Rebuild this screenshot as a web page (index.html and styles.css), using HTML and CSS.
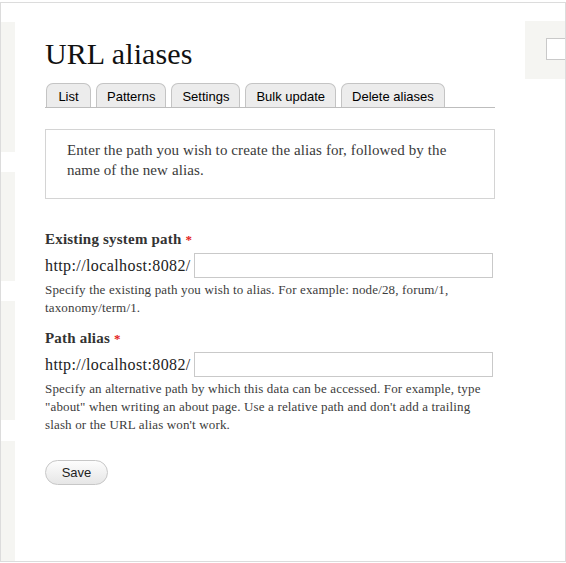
FILE: index.html
```html
<!DOCTYPE html>
<html>
<head>
<meta charset="utf-8">
<title>URL aliases</title>
<link rel="stylesheet" href="styles.css">
</head>
<body>
<div class="crumbs">
  <div class="crumbs-line"><a href="#">Configuration</a> » <a href="#">Search and metadata</a> » <a href="#">URL aliases</a></div>
</div>
<div class="frame">
  <div class="side">
    <div class="side-block b1"></div>
    <div class="side-block b2"></div>
    <div class="side-block b3"></div>
    <div class="side-block b4"></div>
  </div>
  <div class="main">
    <h1 class="title">URL aliases</h1>
    <ul class="tabs">
      <li class="tab">List</li>
      <li class="tab">Patterns</li>
      <li class="tab">Settings</li>
      <li class="tab">Bulk update</li>
      <li class="tab">Delete aliases</li>
    </ul>
    <div class="help">Enter the path you wish to create the alias for, followed by the name of the new alias.</div>
    <div class="field field-first">
      <label class="label">Existing system path <span class="req">*</span></label>
      <div class="prefix-row"><span class="prefix">http://localhost:8082/</span><input class="text-input" type="text"></div>
      <div class="desc">Specify the existing path you wish to alias. For example: node/28, forum/1, taxonomy/term/1.</div>
    </div>
    <div class="field">
      <label class="label">Path alias <span class="req">*</span></label>
      <div class="prefix-row"><span class="prefix">http://localhost:8082/</span><input class="text-input" type="text"></div>
      <div class="desc">Specify an alternative path by which this data can be accessed. For example, type "about" when writing an about page. Use a relative path and don't add a trailing slash or the URL alias won't work.</div>
    </div>
    <button class="save" type="button">Save</button>
  </div>
  <div class="aside">
    <div class="aside-block"><input class="search-input" type="text"></div>
  </div>
</div>
</body>
</html>
```

FILE: styles.css
```css
html, body {
  margin: 0;
  padding: 0;
  background: #fff;
}
body {
  width: 566px;
  height: 563px;
  overflow: hidden;
  font-family: "Liberation Serif", "Times New Roman", serif;
  color: #333;
}
.crumbs {
  height: 2px;
  overflow: hidden;
  display: flex;
  align-items: flex-end;
}
.crumbs-line {
  font-family: "Liberation Sans", Arial, sans-serif;
  font-size: 13px;
  line-height: 13px;
  white-space: nowrap;
  margin-left: -52px;
  color: #7aa6d2;
}
.crumbs-line a {
  color: #5d97cf;
  text-decoration: none;
}
.frame {
  display: flex;
  width: 564px;
  height: 558px;
  border: 1px solid #dcdcdc;
  overflow: hidden;
}
.side {
  width: 14px;
  flex: none;
  display: flex;
  flex-direction: column;
  padding-top: 19px;
}
.side-block {
  background: #f5f5f2;
}
.b1 { height: 130px; }
.b2 { height: 109px; margin-top: 20px; }
.b3 { height: 119px; margin-top: 20px; }
.b4 { height: 120px; margin-top: 21px; }
.main {
  width: 450px;
  flex: none;
  padding-left: 30px;
}
.title {
  margin: 33px 0 0;
  font-weight: normal;
  font-size: 30px;
  line-height: 36px;
  color: #111;
  letter-spacing: 0.1px;
}
.tabs {
  list-style: none;
  margin: 11px 0 0;
  padding: 0 0 0 1px;
  display: flex;
  gap: 5px;
  border-bottom: 1px solid #bdbdbd;
  font-family: "Liberation Sans", Arial, sans-serif;
  font-size: 13px;
  color: #000;
}
.tab {
  min-width: 45px;
  box-sizing: border-box;
  text-align: center;
  height: 24px;
  line-height: 25px;
  padding: 0 10px;
  background: #ececec;
  border: 1px solid #c4c4c4;
  border-bottom: none;
  border-radius: 7px 7px 0 0;
}
.help {
  margin-top: 21px;
  border: 1px solid #d4d4d4;
  padding: 10px 21px 18px;
  font-size: 15px;
  line-height: 20px;
  letter-spacing: 0.1px;
  color: #3a3a3a;
  height: 40px;
}
.field-first {
  margin-top: 32px;
}
.field {
  margin-bottom: 13px;
}
.label {
  display: block;
  font-weight: bold;
  font-size: 15px;
  line-height: 16px;
  letter-spacing: 0.2px;
  color: #333;
}
.req {
  color: #e31b1b;
  font-size: 13px;
}
.prefix-row {
  display: flex;
  align-items: center;
  gap: 3px;
  margin-top: 5px;
}
.prefix {
  font-size: 16px;
  letter-spacing: 0.4px;
  color: #222;
}
.text-input {
  width: 297px;
  height: 23px;
  margin: 0;
  padding: 0;
  border: 1px solid #c9c9c9;
  box-sizing: content-box;
  background: #fff;
}
.desc {
  margin-top: 3px;
  font-size: 13px;
  line-height: 18px;
  letter-spacing: 0.15px;
  color: #3c3c3c;
}
.save {
  display: block;
  margin-top: 26px;
  width: 63px;
  height: 25px;
  border: 1px solid #c7c7c7;
  border-radius: 13px;
  background: linear-gradient(#fdfdfd, #e6e6e6);
  font-family: "Liberation Sans", Arial, sans-serif;
  font-size: 13px;
  color: #222;
  padding: 0;
}
.aside {
  flex: 1;
  padding-left: 30px;
  padding-top: 18px;
}
.aside-block {
  background: #f5f5f2;
  height: 58px;
  padding: 17px 0 0 21px;
  box-sizing: border-box;
}
.search-input {
  display: block;
  width: 40px;
  height: 20px;
  margin: 0;
  padding: 0;
  border: 1px solid #c9c9c9;
  background: #fff;
}
```
